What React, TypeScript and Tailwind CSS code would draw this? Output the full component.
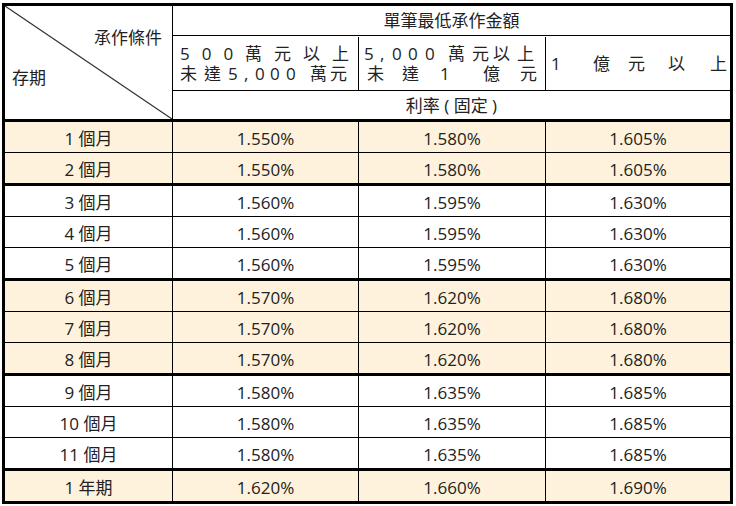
import React from "react";

type Row = { term: string; a: string; b: string; c: string };

const groups: { shaded: boolean; rows: Row[] }[] = [
  {
    shaded: true,
    rows: [
      { term: "1 個月", a: "1.550%", b: "1.580%", c: "1.605%" },
      { term: "2 個月", a: "1.550%", b: "1.580%", c: "1.605%" },
    ],
  },
  {
    shaded: false,
    rows: [
      { term: "3 個月", a: "1.560%", b: "1.595%", c: "1.630%" },
      { term: "4 個月", a: "1.560%", b: "1.595%", c: "1.630%" },
      { term: "5 個月", a: "1.560%", b: "1.595%", c: "1.630%" },
    ],
  },
  {
    shaded: true,
    rows: [
      { term: "6 個月", a: "1.570%", b: "1.620%", c: "1.680%" },
      { term: "7 個月", a: "1.570%", b: "1.620%", c: "1.680%" },
      { term: "8 個月", a: "1.570%", b: "1.620%", c: "1.680%" },
    ],
  },
  {
    shaded: false,
    rows: [
      { term: "9 個月", a: "1.580%", b: "1.635%", c: "1.685%" },
      { term: "10 個月", a: "1.580%", b: "1.635%", c: "1.685%" },
      { term: "11 個月", a: "1.580%", b: "1.635%", c: "1.685%" },
    ],
  },
  {
    shaded: true,
    rows: [{ term: "1 年期", a: "1.620%", b: "1.660%", c: "1.690%" }],
  },
];

function Chars({ chars, cls }: { chars: string[]; cls: string }) {
  return (
    <div className={"leading-[20px] " + cls}>
      {chars.map((c, i) => (
        <span key={i} className="whitespace-nowrap">
          {c}
        </span>
      ))}
    </div>
  );
}

export default function App() {
  return (
    <div className="pt-[3px] pl-[2px] bg-white w-[736px] h-[506px] text-[17px] text-[#222222] font-['Open_Sans','Noto_Sans_CJK_TC',sans-serif]">
      <div className="w-[731px] border-[3px] border-black">
        {/* Header */}
        <div className="flex border-b-[3px] border-black">
          <div className="relative w-[168px] border-r border-black flex flex-col pt-[22px]">
            <svg
              className="absolute inset-0 w-full h-full"
              viewBox="0 0 167 113"
              preserveAspectRatio="none"
            >
              <line x1="0" y1="0" x2="167" y2="113" stroke="#333" strokeWidth="1.2" />
            </svg>
            <div className="self-end pr-[10px] leading-[20px]">承作條件</div>
            <div className="pl-[7px] mt-[20px] leading-[20px]">存期</div>
          </div>
          <div className="flex-1 flex flex-col">
            <div className="h-[30px] pt-[1px] border-b border-black flex items-center justify-center">
              單筆最低承作金額
            </div>
            <div className="h-[55px] pt-[1px] border-b border-black flex">
              <div className="w-[186px] border-r border-black flex flex-col justify-center pl-[7px] pr-[9px]">
                <Chars
                  cls="flex justify-between"
                  chars={["5", "0", "0", "萬", "元", "以", "上"]}
                />
                <Chars
                  cls="grid grid-cols-[24px_24px_16px_11px_15px_16px_24px_20px_18px]"
                  chars={["未", "達", "5", ",", "0", "0", "0", "萬", "元"]}
                />
              </div>
              <div className="w-[187px] border-r border-black flex flex-col justify-center pl-[5px]">
                <Chars
                  cls="grid grid-cols-[16px_12px_16px_17px_23px_24px_21px_24px_19px]"
                  chars={["5", ",", "0", "0", "0", "萬", "元", "以", "上"]}
                />
                <Chars
                  cls="grid ml-[3px] grid-cols-[35px_38px_43px_37px_16px]"
                  chars={["未", "達", "1", "億", "元"]}
                />
              </div>
              <div className="flex-1 flex flex-col justify-center pl-[5px]">
                <Chars
                  cls="grid grid-cols-[42px_35px_40px_42px_17px]"
                  chars={["1", "億", "元", "以", "上"]}
                />
              </div>
            </div>
            <div className="h-[28px] pt-[1px] flex items-center justify-center">利率 ( 固定 )</div>
          </div>
        </div>
        {/* Body */}
        {groups.map((g, gi) => (
          <div
            key={gi}
            className={
              (gi > 0 ? "border-t-[3px] border-black " : "") +
              (g.shaded ? "bg-[#fef2dc]" : "bg-white")
            }
          >
            {g.rows.map((r, ri) => (
              <div
                key={ri}
                className={"flex h-[30px] box-content " + (ri > 0 ? "border-t border-black" : "")}
              >
                <div className="w-[168px] pt-[3px] border-r border-black flex items-center justify-center">
                  {r.term}
                </div>
                <div className="w-[186px] pt-[3px] border-r border-black flex items-center justify-center">
                  {r.a}
                </div>
                <div className="w-[187px] pt-[3px] border-r border-black flex items-center justify-center">
                  {r.b}
                </div>
                <div className="flex-1 pt-[3px] flex items-center justify-center">{r.c}</div>
              </div>
            ))}
          </div>
        ))}
      </div>
    </div>
  );
}
